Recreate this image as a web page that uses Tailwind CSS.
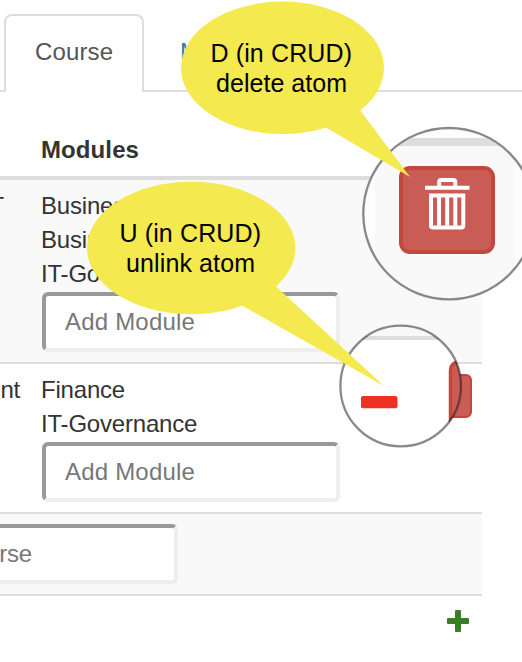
<!DOCTYPE html>
<html lang="en">
<head>
<meta charset="utf-8">
<title>Course</title>
<script src="https://cdn.jsdelivr.net/npm/@tailwindcss/browser@4"></script>
</head>
<body class="relative h-[662px] w-[522px] overflow-hidden bg-white font-['Liberation_Sans',Arial,sans-serif] text-[24px] leading-[34px] tracking-[-0.2px] text-[#333]">
  <nav class="flex h-[92px] items-end">
    <div class="h-[2px] w-[4px] bg-[#ddd]"></div>
    <div class="h-[78px] w-[140px] rounded-t-[8px] border-2 border-b-0 border-[#ddd] pl-[29px] pt-[19px] tracking-[0.15px] text-[#555]">Course</div>
    <div class="h-[78px] flex-1 border-b-2 border-[#ddd] pl-[36px] pt-[21px] text-[#337ab7]">M</div>
  </nav>
  <main class="w-[482px]">
    <header class="h-[88px] border-b-4 border-[#ddd] pl-[41px] pt-[41px] font-bold tracking-[0.1px]">Modules</header>
    <section class="flex h-[184px] border-b-2 border-[#ddd] bg-[#f9f9f9] pt-[10px]">
      <div class="-mt-px flex w-[42px] justify-end pr-[38px]"><span>IT</span></div>
      <div>
        <div class="-ml-px -mt-px mb-px"><p>Business</p><p>Business</p><p>IT-Governance</p></div>
        <div class="h-[60px] w-[298px] rounded-[6px] border-4 border-[#eee] border-l-[#999] border-t-[#999] bg-white pl-[19px] pt-[9px] tracking-[0.2px] text-[#777]">Add Module</div>
      </div>
    </section>
    <section class="flex h-[150px] border-b-2 border-[#ddd] pt-[10px]">
      <div class="-mt-px flex w-[42px] justify-end pr-[22px]"><span>Management</span></div>
      <div>
        <div class="-ml-px -mt-px mb-px"><p>Finance</p><p>IT-Governance</p></div>
        <div class="h-[60px] w-[298px] rounded-[6px] border-4 border-[#eee] border-l-[#999] border-t-[#999] bg-white pl-[19px] pt-[9px] tracking-[0.2px] text-[#777]">Add Module</div>
      </div>
    </section>
    <section class="flex h-[82px] border-b-2 border-[#ddd] bg-[#f9f9f9] pt-[10px]">
      <div class="flex h-[60px] w-[178px] rounded-r-[6px] border-4 border-l-0 border-[#eee] border-t-[#999] bg-white pt-[9px] text-[#777]"><div class="flex w-[32px] justify-end"><span>Course</span></div></div>
    </section>
    <div class="flex justify-end pr-[13px] pt-[14px]">
      <svg width="22" height="22" viewBox="0 0 22 22" fill="#367f22"><rect x="8" width="6" height="22" rx="1"/><rect y="8" width="22" height="6" rx="1"/></svg>
    </div>
  </main>

  <svg class="absolute left-0 top-0 tracking-normal" width="522" height="662" viewBox="0 0 522 662">
    <defs>
      <clipPath id="lensLarge"><circle cx="449" cy="213.7" r="86"/></clipPath>
      <clipPath id="lensSmall"><circle cx="400.7" cy="386" r="60.5"/></clipPath>
    </defs>
    <rect x="429" y="375" width="42" height="42" rx="5" fill="#c95c54" stroke="#c4473e" stroke-width="2"/>
    <g clip-path="url(#lensLarge)">
      <rect x="360" y="125" width="180" height="180" fill="#fdfdfd"/>
      <rect x="375" y="138" width="140" height="165" fill="#f9f9f9"/>
      <rect x="375" y="138" width="140" height="8" fill="#ddd"/>
      <rect x="401" y="168" width="92" height="84" rx="9" fill="#c95c54" stroke="#c4473e" stroke-width="4"/>
      <g fill="none" stroke="#fff" stroke-width="4">
        <path d="M425 187.700H469.500M439.200 187V182Q439.200 180 441.200 180H453.300Q455.300 180 455.300 182V187"/>
        <path d="M431 195.500H463.300V225.500Q463.300 227.500 461.300 227.500H433Q431 227.500 431 225.500ZM439 195V227M447.200 195V227M455.300 195V227"/>
      </g>
    </g>
    <circle cx="449" cy="213.700" r="85.700" fill="none" stroke="#888" stroke-width="2.300"/>
    <g clip-path="url(#lensSmall)">
      <rect x="338" y="323" width="126" height="126" fill="#fff"/>
      <rect x="338" y="323" width="126" height="13" fill="#f9f9f9"/>
      <rect x="338" y="336" width="126" height="4" fill="#ddd"/>
      <rect x="450.500" y="362" width="70" height="80" rx="8" fill="#c95c54" stroke="#c4473e" stroke-width="3.500"/>
      <rect x="361" y="396" width="36.500" height="12.300" rx="2" fill="#ed3223"/>
    </g>
    <circle cx="400.700" cy="386" r="60.300" fill="none" stroke="#000" stroke-opacity=".46" stroke-width="2.300"/>
    <g fill="#f4e94e">
      <ellipse cx="282.500" cy="67.800" rx="101.500" ry="66.200"/>
      <path d="M320 125L326 127.500L410 177L360 110L340 90Z"/>
      <ellipse cx="191.200" cy="248" rx="104.200" ry="66.200"/>
      <path d="M236 300L242 305.500L384 386L275.500 286L255 270Z"/>
    </g>
    <g fill="#000" font-size="25">
      <text x="210.500" y="61.700" textLength="141.500">D (in CRUD)</text>
      <text x="216" y="91.700" textLength="131">delete atom</text>
      <text x="119.500" y="242" textLength="141.500">U (in CRUD)</text>
      <text x="126" y="272" textLength="129">unlink atom</text>
    </g>
  </svg>
</body>
</html>
